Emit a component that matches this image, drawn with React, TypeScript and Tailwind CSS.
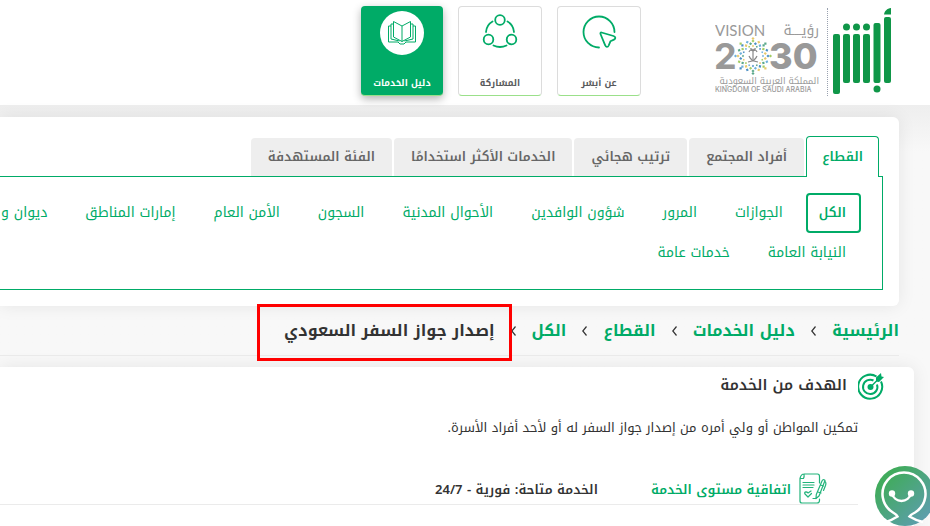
import { ReactNode } from 'react'

const tabs = ['القطاع', 'أفراد المجتمع', 'ترتيب هجائي', 'الخدمات الأكثر استخدامًا', 'الفئة المستهدفة']

const sectors = [
  ['الكل', 'الجوازات', 'المرور', 'شؤون الوافدين', 'الأحوال المدنية', 'السجون', 'الأمن العام', 'إمارات المناطق', 'ديوان و'],
  ['النيابة العامة', 'خدمات عامة'],
]

const breadcrumbs = ['الرئيسية', 'دليل الخدمات', 'القطاع', 'الكل']

const mandalaColors = ['#6fb1dc', '#a3cd62', '#e8c96a', '#5aa88a', '#4a8fc4']

function AbsherLogo() {
  return (
    <svg width="58" height="86" viewBox="0 0 58 86" fill="#0f9648" role="img" aria-label="Absher">
      <rect x="0" y="26" width="7" height="60" rx="2" />
      <rect x="10" y="26" width="7" height="49" rx="2" />
      <rect x="20" y="26" width="7" height="49" rx="2" />
      <rect x="30" y="26" width="7" height="49" rx="2" />
      <rect x="40.500" y="15" width="7" height="60" rx="2" />
      <rect x="51" y="9" width="7" height="66" rx="2" />
      <path d="M51 6.500C51.500 3 54 .5 58 0v6.500z" />
      <circle cx="13.500" cy="19" r="3.500" />
      <circle cx="23.500" cy="19" r="3.500" />
      <circle cx="33.500" cy="19" r="3.500" />
      <circle cx="44" cy="81" r="3.500" />
    </svg>
  )
}

function VisionLogo() {
  const rings = [
    { r: 10, n: 16, s: 1.6, shift: 0 },
    { r: 12.5, n: 16, s: 2.2, shift: 0.5 },
    { r: 15, n: 16, s: 2.2, shift: 0 },
    { r: 17.5, n: 8, s: 2.2, shift: 0 },
  ]

  return (
    <svg width="106" height="74" viewBox="0 0 106 74" direction="ltr" fill="#999999" role="img" aria-label="Vision 2030">
      <text x="0" y="17" fontSize="15" fontFamily="Lato">VISION</text>
      <text x="104" y="16" fontSize="14" fontFamily="Noto Kufi Arabic, Noto Sans, sans-serif" direction="rtl">رؤيــــة</text>
      <text x="-1" y="50" fontSize="36" fontWeight="700" fontFamily="Inter">2</text>
      <text x="54" y="50" fontSize="36" fontWeight="800" fontFamily="Inter">30</text>
      {rings.map((ring, i) =>
        Array.from({ length: ring.n }, (_, k) => {
          const a = ((k + ring.shift) * 2 * Math.PI) / ring.n
          const x = 38 + ring.r * Math.cos(a)
          const y = 37 + ring.r * Math.sin(a)
          return (
            <rect
              key={`${i}-${k}`}
              x={x - ring.s / 2}
              y={y - ring.s / 2}
              width={ring.s}
              height={ring.s}
              fill={mandalaColors[(k + i * 2) % 5]}
              transform={`rotate(${(a * 180) / Math.PI + 45} ${x} ${y})`}
            />
          )
        }),
      )}
      <path
        d="M38 32v8M38 32q-3-2-4 1M38 32q3-2 4 1M38 32q-1-3-3-2M38 32q1-3 3-2M33 43q7-1 9-6M43 43q-7-1-9-6"
        stroke="#888888"
        strokeWidth="1.200"
        fill="none"
      />
      <text x="104" y="65" fontSize="9" fontFamily="Noto Kufi Arabic, Noto Sans, sans-serif" direction="rtl">المملكة العربية السعودية</text>
      <text x="0" y="73" fontSize="7" fontWeight="500" fontFamily="Inter">KINGDOM OF SAUDI ARABIA</text>
    </svg>
  )
}

function CursorIcon() {
  return (
    <svg width="36" height="36" viewBox="0 0 36 36" fill="none" stroke="#00ab67" strokeWidth="1.800" strokeLinejoin="round" strokeLinecap="round">
      <path d="M18 33.500A15.500 15.500 0 1 1 33.500 18" />
      <path d="M20.500 18.500l12 3.500c2.300.8 2.400 2.700.5 3.600l-3.600 1.700-1.700 4.200c-.9 2-2.900 1.800-3.500-.2L19.500 20c-.3-1 .2-1.700 1-1.500z" />
    </svg>
  )
}

function ShareIcon() {
  return (
    <svg width="36" height="36" viewBox="0 0 36 36" fill="none" stroke="#00ab67" strokeWidth="1.800" strokeLinecap="round">
      <circle cx="18" cy="6" r="4.800" />
      <circle cx="6.500" cy="25.500" r="4.800" />
      <circle cx="29.500" cy="25.500" r="4.800" />
      <path d="M10.500 7.500Q4.500 11 4 18M25.500 7.500Q31.500 11 32 18M11.500 31.500q6.500 3 13 0" />
    </svg>
  )
}

function BookIcon() {
  return (
    <svg width="30" height="26" viewBox="0 0 30 26" fill="none" stroke="#00ab67">
      <path d="M15 6v15.500M15 6L6.500 1.500V17L15 21.500 23.500 17V1.500z" />
      <path d="M6.500 4H4v15l8.500 2M23.500 4H26v15l-8.500 2" />
      <path d="M4 6H1.500v16H11l2 2h4l2-2h9.500V6H26" />
    </svg>
  )
}

function TargetIcon() {
  return (
    <svg width="26" height="28" viewBox="0 0 26 28" fill="none" stroke="#00ab67">
      <path d="M18.500 4.500A12 12 0 1 0 23 9.500" strokeWidth="2" />
      <path d="M15.500 8.500A7.200 7.200 0 1 0 19 12.500" strokeWidth="2" />
      <circle cx="12.500" cy="15" r="3" fill="#00ab67" stroke="none" />
      <path d="M12.500 15L20 7.500" strokeWidth="1.500" />
      <path d="M18 5.500L23 1l.5 3.500L26 5l-5 5-3-.5z" fill="#00ab67" stroke="none" />
    </svg>
  )
}

function AgreementIcon() {
  return (
    <svg width="28" height="31" viewBox="0 0 28 31" fill="none" stroke="#22b37b" strokeWidth="1.200" strokeLinejoin="round" strokeLinecap="round">
      <path d="M20.500 10V3.500Q20.500 1 18.500 1H5Q2 1 1 5.500H4.500Q5.500 4 5 1M1 5.500V28q0 2 2 2H18q2.500 0 2.500-2.500V26" />
      <path d="M4 9.500H15M4 12H15M4 14.500H14M14 25.500h3" />
      <path d="M9 24l-3-3q-1-2 1-2.200 1.200 0 2 1.200l3-2M9 24l3.500-3.500" />
      <path d="M23 8q1-2 2.500-1l.5.5L20 23l-3 2.500.3-4zM23 8l-5.700 13.500M26 8.500q1.500 1 .5 4l-2 5M21.500 12l3 1M19 19l3 1" />
    </svg>
  )
}

function Assistant() {
  return (
    <button aria-label="المساعد" className="absolute top-[466px] -right-[5px] rounded-full">
      <svg width="60" height="60" viewBox="0 0 60 60" fill="none">
        <defs>
          <linearGradient id="assistant" x1="0" y1="0" x2="1" y2="1">
            <stop offset="0.200" stopColor="#41ab5d" />
            <stop offset="1" stopColor="#629bbd" />
          </linearGradient>
        </defs>
        <circle cx="30" cy="30" r="30" fill="url(#assistant)" />
        <path
          d="M11 56Q17 54 22.500 50.500 21.500 48.500 18 46.500A21.500 21.500 0 1 1 40 46.500Q36 48.500 34.500 50.500 40 54 48 56"
          stroke="#ffffff"
          strokeWidth="2.500"
        />
        <path d="M17 27.500a9.800 9.800 0 0 0 19 0" stroke="#ffffff" strokeWidth="2.500" />
        <circle cx="17" cy="27.500" r="3.200" fill="#ffffff" />
        <circle cx="36" cy="27.500" r="3.200" fill="#ffffff" />
      </svg>
    </button>
  )
}

function NavCard({ label, active, children }: { label: string; active?: boolean; children: ReactNode }) {
  return (
    <a
      href="#"
      className={
        active
          ? 'flex h-[90px] w-[82px] flex-col items-center justify-between rounded border-b border-[#9be08a] bg-[#00ab67] pt-[5px] pb-1 text-white shadow-[0_3px_8px_rgba(0,0,0,0.3)]'
          : 'flex h-[90px] w-[84px] flex-col items-center justify-between rounded border border-[#dcdcdc] border-b-[#9be08a] pt-[7px] pb-1 text-[#58595b]'
      }>
      {children}
      <span className="text-[9px] leading-4 font-bold">{label}</span>
    </a>
  )
}

function Header() {
  return (
    <header className="flex h-[105px] items-start bg-white pr-[39px]">
      <a href="#" className="mt-2">
        <AbsherLogo />
      </a>
      <div className="mt-2 mr-[5px] h-[88px] border-r border-dotted border-gray-400" />
      <a href="#" className="mt-[19px] mr-[6px]">
        <VisionLogo />
      </a>
      <nav className="mt-[6px] mr-[74px] flex gap-[15px]">
        <NavCard label="عن أبشر">
          <CursorIcon />
        </NavCard>
        <NavCard label="المشاركة">
          <ShareIcon />
        </NavCard>
        <NavCard label="دليل الخدمات" active>
          <span className="flex h-11 w-11 items-center justify-center rounded-full bg-white">
            <BookIcon />
          </span>
        </NavCard>
      </nav>
    </header>
  )
}

function SectorPanel() {
  return (
    <section className="mr-[31px] rounded-r-md bg-white pt-[19px] pr-4 pb-4 shadow-[0_0_18px_rgba(0,0,0,0.08)]">
      <div className="flex items-end gap-[2px] pr-1" role="tablist">
        {tabs.map((tab, i) => (
          <button
            key={tab}
            role="tab"
            aria-selected={i === 0}
            className={
              i === 0
                ? 'relative -mb-px h-[41px] rounded-t border border-b-0 border-[#00ab67] bg-white px-[15px] text-[13px] font-semibold whitespace-nowrap text-[#00ab67]'
                : 'h-[38px] rounded-t bg-[#eeeeee] px-[17px] text-[13px] font-semibold whitespace-nowrap text-[#666666]'
            }>
            {tab}
          </button>
        ))}
      </div>
      <div className="border-y border-r border-[#00ab67] py-4 pr-[21px]">
        {sectors.map((row, r) => (
          <div key={r} className="flex gap-2">
            {row.map((sector, i) => (
              <a
                key={sector}
                href="#"
                className={
                  r === 0 && i === 0
                    ? 'h-10 shrink-0 rounded border-2 border-[#00ab67] pr-[13px] pl-[11px] text-[13px] leading-9 font-semibold whitespace-nowrap text-[#00ab67]'
                    : 'h-10 shrink-0 border-2 border-transparent px-[13px] text-[14px] leading-9 whitespace-nowrap text-[#00ab67]'
                }>
                {sector}
              </a>
            ))}
          </div>
        ))}
      </div>
    </section>
  )
}

function Breadcrumbs() {
  return (
    <nav className="mr-[31px] flex h-[50px] items-center gap-4 border-b border-[#ebebeb] text-[16px] leading-6 font-bold whitespace-nowrap">
      {breadcrumbs.map((crumb) => (
        <span key={crumb} className="flex items-center gap-4">
          <a href="#" className="text-[#00ab67]">
            {crumb}
          </a>
          <svg width="5" height="10" viewBox="0 0 5 10" fill="none" stroke="#333333" strokeWidth="1.200">
            <path d="M4.500.5L.8 5l3.700 4.500" />
          </svg>
        </span>
      ))}
      <span className="relative text-[#333333]">
        إصدار جواز السفر السعودي
        <span className="absolute -top-[15px] -right-[17px] -bottom-[18px] -left-[27px] border-3 border-[#ff0000]" />
      </span>
    </nav>
  )
}

function ServiceDetails() {
  return (
    <section className="mt-[11px] mr-4 h-[200px] rounded-tr-md bg-white pr-[30px] shadow-[0_0_18px_rgba(0,0,0,0.08)]">
      <h2 className="flex h-[37px] items-center gap-[11px] text-[15px] font-semibold text-[#333333]">
        <TargetIcon />
        الهدف من الخدمة
      </h2>
      <p className="mt-3 pr-[26px] text-[13px] leading-6 text-[#333333]">
        تمكين المواطن أو ولي أمره من إصدار جواز السفر له أو لأحد أفراد الأسرة.
      </p>
      <div className="mt-[33px] mr-[26px] flex h-8 items-end border-b border-[#ebebeb] pr-[31px] text-[13px] leading-7 font-semibold">
        <AgreementIcon />
        <a href="#" className="mr-2 text-[#00ab67]">
          اتفاقية مستوى الخدمة
        </a>
        <span className="mr-[53px] text-[#333333]">الخدمة متاحة: فورية - 24/7</span>
      </div>
    </section>
  )
}

export default function App() {
  return (
    <div
      dir="rtl"
      className="relative h-screen overflow-hidden bg-[#f8f8f8] font-['Noto_Kufi_Arabic','Noto_Sans',sans-serif]">
      <Header />
      <main className="bg-linear-to-b from-[#eeeeee] to-[#f8f8f8] to-10% pt-3">
        <SectorPanel />
        <Breadcrumbs />
        <ServiceDetails />
      </main>
      <Assistant />
    </div>
  )
}
